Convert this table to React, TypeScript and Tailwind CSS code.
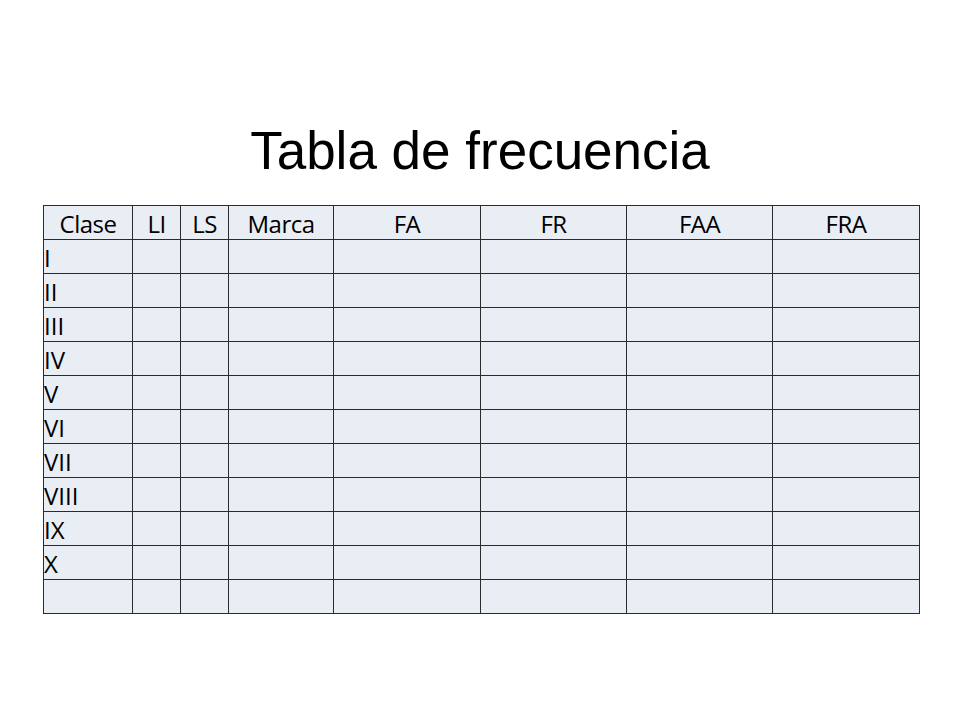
const columns = [
  { label: "Clase", width: 89 },
  { label: "LI", width: 48 },
  { label: "LS", width: 48 },
  { label: "Marca", width: 105 },
  { label: "FA", width: 147 },
  { label: "FR", width: 146 },
  { label: "FAA", width: 146 },
  { label: "FRA", width: 147 },
];

const rows = ["I", "II", "III", "IV", "V", "VI", "VII", "VIII", "IX", "X", ""];

const App = () => {
  return (
    <div className="w-[960px] h-[720px] bg-white relative">
      <div className="pt-[120px] flex justify-center">
        <h1 className="text-[53px] leading-[61px] text-black font-['Liberation_Sans',Arial,sans-serif]">
          Tabla de frecuencia
        </h1>
      </div>
      <div className="pt-[24px] pl-[43px]">
        <table className="table-fixed border-collapse bg-[#e9edf4] font-['Open_Sans',sans-serif] text-[24px] text-black w-[876px]">
          <colgroup>
            {columns.map((c) => (
              <col key={c.label} style={{ width: c.width }} />
            ))}
          </colgroup>
          <thead>
            <tr className="h-[34px]">
              {columns.map((c) => (
                <th
                  key={c.label}
                  className="border border-[#2b2b2b] font-normal text-center p-0 pt-[2px] leading-[31px] tracking-[-0.5px]"
                >
                  {c.label}
                </th>
              ))}
            </tr>
          </thead>
          <tbody>
            {rows.map((r, i) => (
              <tr key={i} className="h-[34px]">
                {columns.map((c, j) => (
                  <td
                    key={c.label}
                    className="border border-[#2b2b2b] p-0 pt-[2px] text-left leading-[31px]"
                  >
                    {j === 0 ? r : ""}
                  </td>
                ))}
              </tr>
            ))}
          </tbody>
        </table>
      </div>
    </div>
  );
};

export default App;
